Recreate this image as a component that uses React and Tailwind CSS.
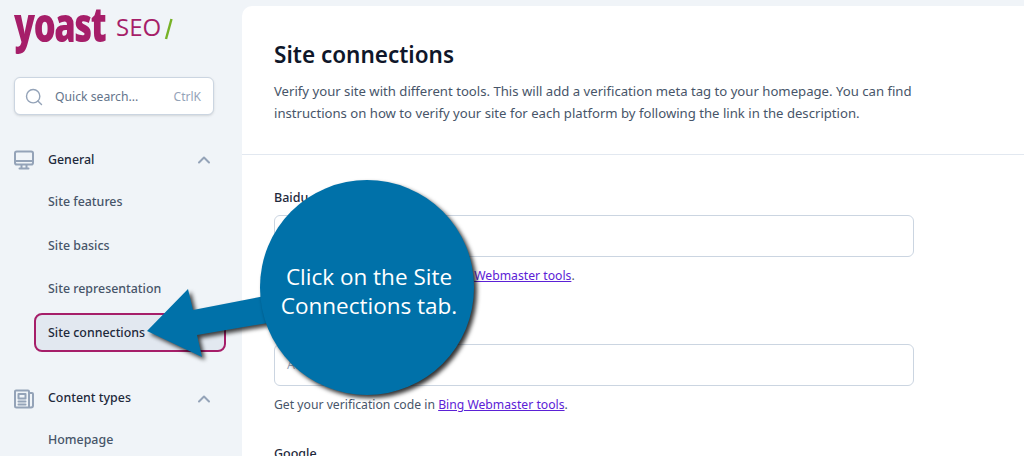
import { ChevronUp, Search } from 'lucide-react';

const FONT = "font-['Noto_Sans','Open_Sans',sans-serif]";

function NavItem({ children, active }) {
  if (active) {
    return (
      <div className="mt-[1.6px] h-[39px] w-[192px] flex items-center pl-[12px] pt-[2px] rounded-[8px] border-2 border-[#a61e69] bg-[#e2e8f0] text-[12.4px] font-medium text-[#1e293b]">
        {children}
      </div>
    );
  }
  return <div className="h-[43.4px] flex items-center pl-[14px] text-[12.4px] font-medium text-[#475569]">{children}</div>;
}

function MonitorIcon() {
  return (
    <svg width="20" height="20" viewBox="0 0 20 20" fill="none" stroke="#94a3b8" strokeWidth="2" strokeLinecap="round" strokeLinejoin="round">
      <rect x="1" y="1.5" width="18" height="13" rx="1.8" />
      <path d="M1 11h18M7.5 15v3M12.5 15v3M5.5 18.6h9" />
    </svg>
  );
}

function NewsIcon() {
  return (
    <svg width="20" height="20" viewBox="0 0 20 20" fill="none" stroke="#94a3b8" strokeWidth="2" strokeLinecap="round" strokeLinejoin="round">
      <path d="M15 4V2.5a1 1 0 0 0-1-1H2a1 1 0 0 0-1 1V17a1.5 1.5 0 0 0 1.5 1.5H17a2 2 0 0 0 2-2V5a1 1 0 0 0-1-1h-3v14" />
      <rect x="4.5" y="5" width="7" height="4.5" />
      <path d="M4.5 12.5h7M4.5 15.5h7" />
    </svg>
  );
}

function Field({ label, value, before, link, className }) {
  return (
    <div className={className}>
      <div className="text-[12.5px] leading-[20px] font-medium text-[#1e293b]">{label}</div>
      <div className="mt-[7px] h-[42px] w-[640px] rounded-[6px] border border-[#cbd5e1] flex items-center pl-[12px] text-[12.5px] text-[#94a3b8]">{value}</div>
      <div className="mt-[9px] text-[12.2px] leading-[20px] text-[#475569]">
        {before} <span className="underline text-[#5b21d6]">{link}</span>.
      </div>
    </div>
  );
}

export default function App() {
  return (
    <div className={`relative w-[1024px] h-[456px] overflow-hidden flex bg-[#f0f4f8] ${FONT}`}>
      <aside className="w-[242px] shrink-0 pl-[14px]">
        <div className="h-[77px] flex items-start">
          <span className="block w-[102px] mt-[-6px] origin-top-left scale-x-[0.72] font-['Open_Sans'] text-[48px] leading-[60px] font-extrabold tracking-[-2px] text-[#a61e69]">yoast</span>
          <span className="mt-[11px] font-['Open_Sans'] text-[24px] leading-[32px] font-normal text-[#a61e69]">SEO</span>
          <svg className="mt-[17px] ml-[3px]" width="9" height="24" viewBox="0 0 9 24">
            <path d="M7.5 2 2 22" stroke="#77b227" strokeWidth="2.4" />
          </svg>
        </div>
        <div className="h-[38px] w-[200px] rounded-[6px] bg-white border border-[#cbd5e1] shadow-sm flex items-center pl-[9px] pr-[12px] pt-[2px] text-[#64748b]">
          <Search size={20} strokeWidth={1.7} className="text-[#94a3b8]" />
          <span className="ml-[11px] text-[12.2px] text-[#64748b]">Quick search...</span>
          <span className="ml-auto text-[12px] text-[#94a3b8]">CtrlK</span>
        </div>
        <div className="mt-[35px] h-[20px] w-[200px] flex items-center">
          <MonitorIcon />
          <span className="ml-[14px] text-[12.4px] font-medium text-[#1e293b]">General</span>
          <ChevronUp size={20} strokeWidth={2.4} className="ml-auto text-[#94a3b8]" />
        </div>
        <div className="mt-[11px] ml-[20px]">
          <NavItem>Site features</NavItem>
          <NavItem>Site basics</NavItem>
          <NavItem>Site representation</NavItem>
          <NavItem active>Site connections</NavItem>
        </div>
        <div className="mt-[37px] h-[20px] w-[200px] flex items-center">
          <NewsIcon />
          <span className="ml-[14px] text-[12.4px] font-medium text-[#1e293b]">Content types</span>
          <ChevronUp size={20} strokeWidth={2.4} className="ml-auto text-[#94a3b8]" />
        </div>
        <div className="mt-[10px] ml-[20px]">
          <NavItem>Homepage</NavItem>
        </div>
      </aside>

      <main className="flex-1 mt-[6px] bg-white rounded-tl-[10px] overflow-hidden">
        <div className="h-[149px] border-b border-[#e2e8f0] pl-[32px] pt-[32px]">
          <h1 className="text-[22.5px] leading-[34px] font-semibold text-[#0f172a]">Site connections</h1>
          <p className="mt-[8px] w-[670px] text-[13.15px] leading-[22px] text-[#475569]">
            Verify your site with different tools. This will add a verification meta tag to your homepage. You can find instructions on how to verify your site for each platform by following the link in the description.
          </p>
        </div>
        <div className="pl-[32px] pt-[33px]">
          <Field label="Baidu" value="Add verification code" before="Get your verification code in Baidu" link="Webmaster tools" />
          <Field className="mt-[31px]" label="Bing" value="Add verification code" before="Get your verification code in" link="Bing Webmaster tools" />
          <div className="mt-[29px] text-[12.5px] leading-[20px] font-medium text-[#1e293b]">Google</div>
        </div>
      </main>

      <svg className="absolute left-[140px] top-[280px] drop-shadow-[3px_3px_2px_rgba(0,0,0,0.75)]" width="140" height="85" viewBox="140 280 140 85">
        <path d="M147 331 188 289 193 310 265 296 268 323 197 335 202 357Z" fill="#0071a9" />
      </svg>
      <div className="absolute left-[260px] top-[180px] w-[214px] h-[215px] pt-[7px] pl-[4px] rounded-full bg-[#0071a9] shadow-[3px_3px_4px_rgba(0,0,0,0.8)] flex items-center justify-center text-center font-['Open_Sans'] text-[22.5px] leading-[29px] text-white">
        <div>Click on the Site<br />Connections tab.</div>
      </div>
    </div>
  );
}
